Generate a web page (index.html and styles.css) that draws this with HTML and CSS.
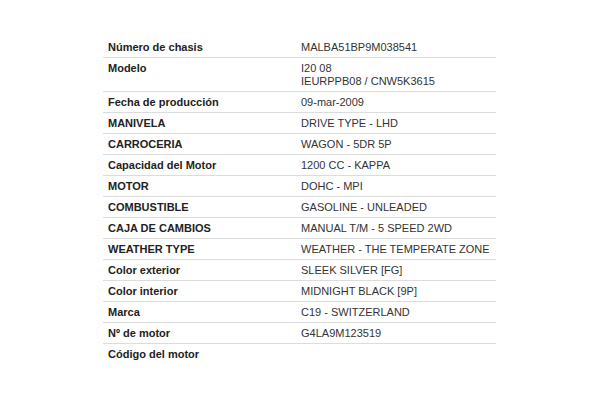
FILE: index.html
```html
<!DOCTYPE html>
<html lang="es">
<head>
<meta charset="utf-8">
<title>Ficha del vehículo</title>
<link rel="stylesheet" href="styles.css">
</head>
<body>
<div class="page">
  <table class="specs">
    <tr><th>Número de chasis</th><td>MALBA51BP9M038541</td></tr>
    <tr><th>Modelo</th><td>I20 08<br>IEURPPB08 / CNW5K3615</td></tr>
    <tr><th>Fecha de producción</th><td>09-mar-2009</td></tr>
    <tr><th>MANIVELA</th><td>DRIVE TYPE - LHD</td></tr>
    <tr><th>CARROCERIA</th><td>WAGON - 5DR 5P</td></tr>
    <tr><th>Capacidad del Motor</th><td>1200 CC - KAPPA</td></tr>
    <tr><th>MOTOR</th><td>DOHC - MPI</td></tr>
    <tr><th>COMBUSTIBLE</th><td>GASOLINE - UNLEADED</td></tr>
    <tr><th>CAJA DE CAMBIOS</th><td>MANUAL T/M - 5 SPEED 2WD</td></tr>
    <tr><th>WEATHER TYPE</th><td>WEATHER - THE TEMPERATE ZONE</td></tr>
    <tr><th>Color exterior</th><td>SLEEK SILVER [FG]</td></tr>
    <tr><th>Color interior</th><td>MIDNIGHT BLACK [9P]</td></tr>
    <tr><th>Marca</th><td>C19 - SWITZERLAND</td></tr>
    <tr><th>Nº de motor</th><td>G4LA9M123519</td></tr>
    <tr class="last"><th>Código del motor</th><td></td></tr>
  </table>
</div>
</body>
</html>
```

FILE: styles.css
```css
html, body {
  margin: 0;
  padding: 0;
  background: #fff;
}
.page {
  padding: 37px 0 0 103px;
}
.specs {
  width: 393px;
  border-collapse: collapse;
  font-family: "Liberation Sans", Arial, sans-serif;
  font-size: 11px;
  line-height: 13px;
}
.specs th,
.specs td {
  text-align: left;
  vertical-align: top;
  padding: 4px 5px 3px 5px;
  border-bottom: 1px solid #dcdcdc;
}
.specs th {
  width: 183px;
  font-weight: bold;
  color: #222;
}
.specs td {
  color: #333;
}
.specs .last th,
.specs .last td {
  border-bottom: none;
}
```
